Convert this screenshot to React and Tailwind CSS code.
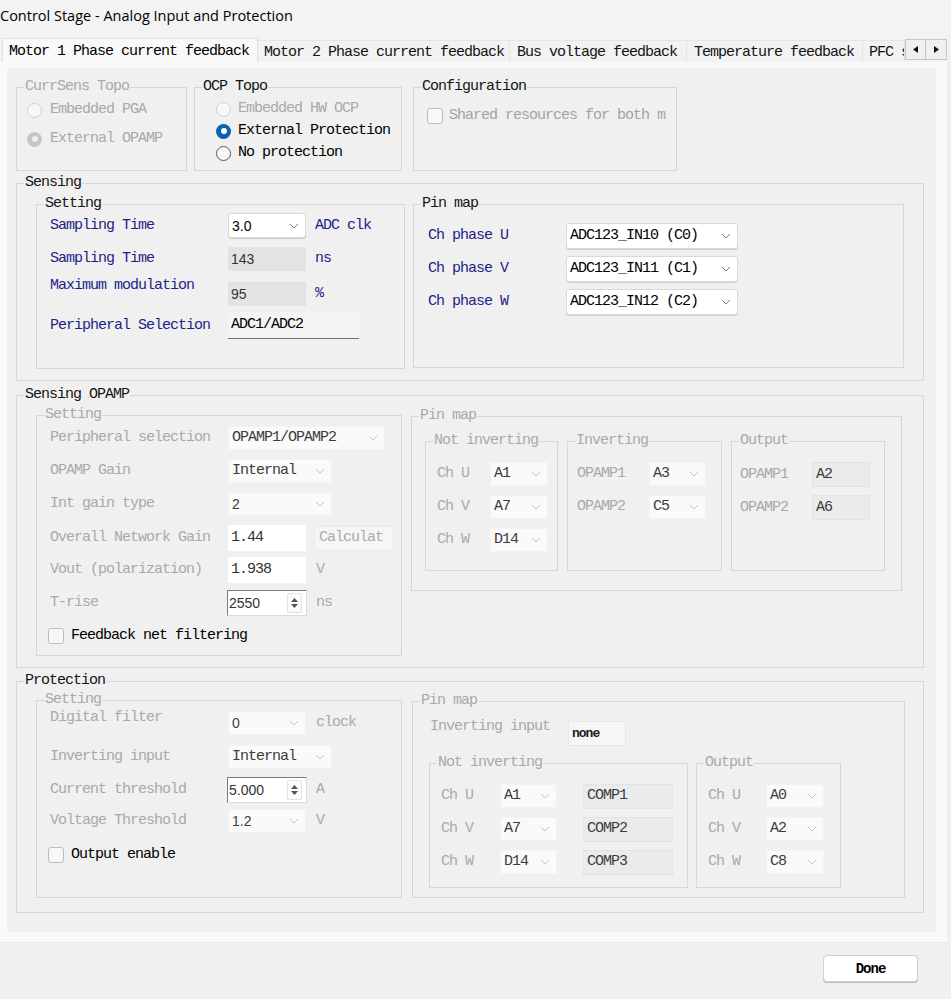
import React from "react";

const SANS = "font-['Segoe_UI','Liberation_Sans',sans-serif] tracking-normal text-[14px]";

const TONE = {
  dark: "text-[#141414]",
  off: "text-[#a9a9a9]",
  blue: "text-[#1e1e86]",
};

function Group({ title, tone = "dark", className = "", children }) {
  return (
    <div className={`relative border border-[#d6d6d6] ${className}`}>
      <span className={`absolute left-[7px] -top-[10px] px-[1px] bg-[#f0f0f0] leading-[18px] ${TONE[tone]}`}>
        {title}
      </span>
      {children}
    </div>
  );
}

function Chevron({ light }) {
  return (
    <svg width="10" height="6" viewBox="0 0 10 6" className={light ? "text-[#c4c4c4]" : "text-[#7a7a7a]"}>
      <path d="M1 1 L5 5 L9 1" fill="none" stroke="currentColor" strokeWidth="1" />
    </svg>
  );
}

function Select({ value, className = "", off, sans }) {
  const box = off
    ? "bg-[#fafafa] border border-[#f3f3f3] text-[#3c3c3c]"
    : "bg-white border border-[#d9d9d9] rounded-[3px] shadow-[0_1px_0_#cfcfcf] text-black";
  return (
    <div className={`flex items-center justify-between pl-[3px] pr-[6px] ${box} ${className}`}>
      <span className={sans ? SANS : ""}>{value}</span>
      <Chevron light={off} />
    </div>
  );
}

function Field({ value, className = "", sans }) {
  return (
    <div className={`flex items-center pl-[3px] ${className}`}>
      <span className={sans ? SANS : ""}>{value}</span>
    </div>
  );
}

function Spin({ value, className = "" }) {
  return (
    <div className={`flex items-center justify-between bg-white border border-[#dcdcdc] border-l-[#7c7c7c] border-t-[#7c7c7c] pl-[1px] pr-[4px] ${className}`}>
      <span className={`${SANS} text-[#333]`}>{value}</span>
      <div className="flex flex-col w-[15px] h-[20px] border border-[#e2e2e2] rounded-[2px] bg-[#fbfbfb] items-center justify-center gap-[2px]">
        <svg width="7" height="4" viewBox="0 0 7 4"><path d="M0 4 L3.5 0 L7 4 Z" fill="#555" /></svg>
        <svg width="7" height="4" viewBox="0 0 7 4"><path d="M0 0 L3.5 4 L7 0 Z" fill="#555" /></svg>
      </div>
    </div>
  );
}

function Radio({ state }) {
  if (state === "offOn")
    return (
      <div className="w-[15px] h-[15px] rounded-full bg-[#c6c6c6] flex items-center justify-center">
        <div className="w-[6px] h-[6px] rounded-full bg-[#efefef]" />
      </div>
    );
  if (state === "on")
    return (
      <div className="w-[15px] h-[15px] rounded-full bg-[#0a62b5] flex items-center justify-center">
        <div className="w-[6px] h-[6px] rounded-full bg-white" />
      </div>
    );
  if (state === "none") return <div className="w-[15px] h-[15px] rounded-full border border-[#5a5a5a] bg-[#f7f7f7]" />;
  return <div className="w-[15px] h-[15px] rounded-full border border-[#d0d0d0] bg-[#f7f7f7]" />;
}

function Check() {
  return <div className="w-[16px] h-[16px] rounded-[3px] border border-[#bcbcbc] bg-[#f8f8f8] shrink-0" />;
}

function Tab({ label, className = "" }) {
  return (
    <div className={`h-[22px] shrink-0 bg-[#f2f2f2] border-t border-r border-[#e4e4e4] flex items-center pt-[2px] pl-[6px] whitespace-nowrap overflow-hidden ${className}`}>
      {label}
    </div>
  );
}

export default function App() {
  return (
    <div className="w-[951px] h-[999px] bg-[#f0f0f0] flex flex-col overflow-hidden font-['Liberation_Mono',monospace] text-[15px] leading-[18px] tracking-[-1px] text-[#141414]">
      {/* window title */}
      <div className="h-[38px] bg-[#f3f3f3] pt-[5px]">
        <span className="font-['Segoe_UI','Open_Sans',sans-serif] text-[14.5px] leading-[22px] tracking-normal text-black">
          Control Stage - Analog Input and Protection
        </span>
      </div>

      {/* tab strip */}
      <div className="h-[24px] flex items-end bg-[#f3f3f3]">
        <div className="ml-[2px] w-[256px] h-[24px] bg-[#f9f9f9] border-t border-l border-r border-[#e0e0e0] flex items-center pt-[2px] pl-[6px] text-black">
          Motor 1 Phase current feedback
        </div>
        <div className="flex items-end w-[647px] overflow-hidden">
          <Tab label="Motor 2 Phase current feedback" className="w-[252px] pl-[5px]" />
          <Tab label="Bus voltage feedback" className="w-[177px] pl-[7px]" />
          <Tab label="Temperature feedback" className="w-[176px] pl-[7px]" />
          <Tab label="PFC s" className="w-[42px]" />
        </div>
        <div className="flex mb-[2px]">
          <div className="w-[21px] h-[21px] border border-[#c6c6c6] bg-[#f0f0f0] flex items-center justify-center">
            <svg width="5" height="7" viewBox="0 0 5 7"><path d="M5 0 L0 3.5 L5 7 Z" fill="#111" /></svg>
          </div>
          <div className="w-[21px] h-[21px] border border-l-0 border-[#c6c6c6] bg-[#f0f0f0] flex items-center justify-center">
            <svg width="5" height="7" viewBox="0 0 5 7"><path d="M0 0 L5 3.5 L0 7 Z" fill="#111" /></svg>
          </div>
        </div>
      </div>

      {/* tab page */}
      <div className="w-[947px] h-[881px] bg-[#f9f9f9] pl-[7px] pt-[6px] border-b border-[#e6e6e6]">
        <div className="w-[929px] h-[864px] bg-[#f0f0f0] pl-[9px] pt-[19px]">
          {/* topology row */}
          <div className="flex items-start">
            <Group title="CurrSens Topo" tone="off" className="w-[171px] h-[84px] pl-[10px] pt-[12px]">
              <div className="flex flex-col gap-[9px] text-[#a9a9a9]">
                <div className="flex items-center h-[20px] gap-[8px]"><Radio state="off" /><span>Embedded PGA</span></div>
                <div className="flex items-center h-[20px] gap-[8px]"><Radio state="offOn" /><span>External OPAMP</span></div>
              </div>
            </Group>
            <Group title="OCP Topo" className="ml-[7px] w-[208px] h-[84px] pl-[21px] pt-[10px]">
              <div className="flex flex-col">
                <div className="flex items-center h-[22px] gap-[7px] text-[#a9a9a9]"><Radio state="off" /><span>Embedded HW OCP</span></div>
                <div className="flex items-center h-[22px] gap-[7px] text-black"><Radio state="on" /><span>External Protection</span></div>
                <div className="flex items-center h-[22px] gap-[7px] text-black"><Radio state="none" /><span>No protection</span></div>
              </div>
            </Group>
            <Group title="Configuration" className="ml-[11px] w-[264px] h-[84px] pl-[13px] pt-[19px]">
              <div className="flex items-center gap-[6px] text-[#a3a3a3] whitespace-nowrap">
                <Check />
                <span>Shared resources for both m</span>
              </div>
            </Group>
          </div>

          {/* Sensing */}
          <Group title="Sensing" className="mt-[12px] w-[908px] h-[198px] pl-[19px] pt-[20px] flex items-start">
            <Group title="Setting" className="w-[369px] h-[165px] pl-[13px] pt-[8px]">
              <div className="flex items-center h-[25px]">
                <span className="w-[178px] text-[#1e1e86]">Sampling Time</span>
                <Select value="3.0" sans className="w-[78px] h-[25px]" />
                <span className="ml-[9px] text-[#1e1e86]">ADC clk</span>
              </div>
              <div className="flex items-center h-[24px] mt-[9px]">
                <span className="w-[178px] text-[#1e1e86]">Sampling Time</span>
                <Field value="143" sans className="w-[78px] h-[24px] bg-[#e3e3e3] text-[#333]" />
                <span className="ml-[9px] text-[#1e1e86]">ns</span>
              </div>
              <div className="flex items-center h-[24px] mt-[11px]">
                <span className="w-[178px] self-start -mt-[5px] text-[#1e1e86]">Maximum modulation</span>
                <Field value="95" sans className="w-[78px] h-[24px] bg-[#e3e3e3] text-[#333]" />
                <span className="ml-[9px] text-[#1e1e86]">%</span>
              </div>
              <div className="flex items-center h-[27px] mt-[6px]">
                <span className="w-[178px] text-[#1e1e86]">Peripheral Selection</span>
                <Field value="ADC1/ADC2" className="w-[131px] h-[27px] bg-[#f4f4f4] border-b border-[#6f6f6f] text-black" />
              </div>
            </Group>
            <Group title="Pin map" className="ml-[8px] w-[491px] h-[164px] pl-[14px] pt-[18px]">
              <div className="flex flex-col gap-[7px]">
                {[
                  ["Ch phase U", "ADC123_IN10 (C0)"],
                  ["Ch phase V", "ADC123_IN11 (C1)"],
                  ["Ch phase W", "ADC123_IN12 (C2)"],
                ].map(([l, v]) => (
                  <div key={l} className="flex items-center h-[26px]">
                    <span className="w-[138px] text-[#1e1e86]">{l}</span>
                    <Select value={v} className="w-[172px] h-[26px]" />
                  </div>
                ))}
              </div>
            </Group>
          </Group>

          {/* Sensing OPAMP */}
          <Group title="Sensing OPAMP" className="mt-[14px] w-[908px] h-[273px] pl-[19px] pt-[19px] flex items-start">
            <Group title="Setting" tone="off" className="w-[366px] h-[241px] pl-[13px] pt-[10px]">
              <div className="flex items-center h-[24px]">
                <span className="w-[178px] text-[#a9a9a9]">Peripheral selection</span>
                <Select off value="OPAMP1/OPAMP2" className="w-[157px] h-[24px]" />
              </div>
              <div className="flex items-center h-[24px] mt-[9px]">
                <span className="w-[178px] text-[#a9a9a9]">OPAMP Gain</span>
                <Select off value="Internal" className="w-[104px] h-[24px]" />
              </div>
              <div className="flex items-center h-[24px] mt-[9px]">
                <span className="w-[178px] text-[#a9a9a9]">Int gain type</span>
                <Select off sans value="2" className="w-[104px] h-[24px]" />
              </div>
              <div className="flex items-center h-[26px] mt-[9px]">
                <span className="w-[178px] text-[#a9a9a9]">Overall Network Gain</span>
                <Field value="1.44" className="w-[78px] h-[26px] bg-white text-[#333]" />
                <div className="ml-[8px] w-[80px] h-[25px] bg-[#f6f6f6] border border-[#ebebeb] rounded-[3px] flex items-center pl-[4px] text-[#ababab] whitespace-nowrap overflow-hidden">
                  Calculat
                </div>
              </div>
              <div className="flex items-center h-[26px] mt-[6px]">
                <span className="w-[178px] text-[#a9a9a9]">Vout (polarization)</span>
                <Field value="1.938" className="w-[78px] h-[26px] bg-white text-[#333]" />
                <span className="ml-[10px] text-[#a9a9a9]">V</span>
              </div>
              <div className="flex items-center h-[26px] mt-[7px]">
                <span className="w-[177px] text-[#a9a9a9]">T-rise</span>
                <Spin value="2550" className="w-[80px] h-[26px]" />
                <span className="ml-[9px] text-[#a9a9a9]">ns</span>
              </div>
              <div className="flex items-center h-[18px] mt-[11px] -ml-[2px] gap-[7px] text-black">
                <Check />
                <span>Feedback net filtering</span>
              </div>
            </Group>
            <Group title="Pin map" tone="off" className="ml-[9px] mt-[1px] w-[491px] h-[175px] pl-[13px] pt-[24px] flex items-start">
              <Group title="Not inverting" tone="off" className="w-[133px] h-[130px] pl-[11px] pt-[20px]">
                <div className="flex flex-col gap-[9px]">
                  {[["Ch U", "A1"], ["Ch V", "A7"], ["Ch W", "D14"]].map(([l, v]) => (
                    <div key={l} className="flex items-center h-[24px]">
                      <span className="w-[53px] text-[#a9a9a9]">{l}</span>
                      <Select off value={v} className="w-[58px] h-[24px]" />
                    </div>
                  ))}
                </div>
              </Group>
              <Group title="Inverting" tone="off" className="ml-[9px] w-[155px] h-[130px] pl-[9px] pt-[20px]">
                <div className="flex flex-col gap-[9px]">
                  {[["OPAMP1", "A3"], ["OPAMP2", "C5"]].map(([l, v]) => (
                    <div key={l} className="flex items-center h-[24px]">
                      <span className="w-[72px] text-[#a9a9a9]">{l}</span>
                      <Select off value={v} className="w-[57px] h-[24px]" />
                    </div>
                  ))}
                </div>
              </Group>
              <Group title="Output" tone="off" className="ml-[9px] w-[154px] h-[130px] pl-[8px] pt-[20px]">
                <div className="flex flex-col gap-[8px]">
                  {[["OPAMP1", "A2"], ["OPAMP2", "A6"]].map(([l, v]) => (
                    <div key={l} className="flex items-center h-[25px]">
                      <span className="w-[72px] text-[#a9a9a9]">{l}</span>
                      <Field value={v} className="w-[58px] h-[25px] bg-[#ebebeb] border border-[#e3e3e3] text-[#3c3c3c]" />
                    </div>
                  ))}
                </div>
              </Group>
            </Group>
          </Group>

          {/* Protection */}
          <Group title="Protection" className="mt-[13px] w-[908px] h-[232px] pl-[19px] pt-[18px] flex items-start">
            <Group title="Setting" tone="off" className="w-[366px] h-[198px] pl-[13px] pt-[10px]">
              <div className="flex items-center h-[24px]">
                <span className="w-[178px] self-start -mt-[2px] text-[#a9a9a9]">Digital filter</span>
                <Select off sans value="0" className="w-[78px] h-[24px]" />
                <span className="ml-[10px] text-[#a9a9a9]">clock</span>
              </div>
              <div className="flex items-center h-[24px] mt-[10px]">
                <span className="w-[178px] text-[#a9a9a9]">Inverting input</span>
                <Select off value="Internal" className="w-[104px] h-[24px]" />
              </div>
              <div className="flex items-center h-[26px] mt-[8px]">
                <span className="w-[177px] text-[#a9a9a9]">Current threshold</span>
                <Spin value="5.000" className="w-[80px] h-[26px]" />
                <span className="ml-[9px] text-[#a9a9a9]">A</span>
              </div>
              <div className="flex items-center h-[24px] mt-[6px]">
                <span className="w-[178px] text-[#a9a9a9]">Voltage Threshold</span>
                <Select off sans value="1.2" className="w-[78px] h-[24px]" />
                <span className="ml-[10px] text-[#a9a9a9]">V</span>
              </div>
              <div className="flex items-center h-[18px] mt-[13px] -ml-[2px] gap-[7px] text-black">
                <Check />
                <span>Output enable</span>
              </div>
            </Group>
            <Group title="Pin map" tone="off" className="ml-[10px] mt-[1px] w-[493px] h-[197px] pl-[16px] pt-[19px]">
              <div className="flex items-center h-[25px]">
                <span className="ml-[1px] w-[138px] self-start -mt-[3px] text-[#a9a9a9]">Inverting input</span>
                <Field value="none" className="w-[58px] h-[25px] bg-[#f6f6f6] border border-[#e8e8e8] text-[13px] font-bold text-[#222]" />
              </div>
              <div className="flex items-start mt-[17px]">
                <Group title="Not inverting" tone="off" className="w-[259px] h-[125px] pl-[11px] pt-[20px]">
                  <div className="flex flex-col gap-[9px]">
                    {[["Ch U", "A1", "COMP1"], ["Ch V", "A7", "COMP2"], ["Ch W", "D14", "COMP3"]].map(([l, v, c]) => (
                      <div key={l} className="flex items-center h-[24px]">
                        <span className="w-[59px] text-[#a9a9a9]">{l}</span>
                        <Select off value={v} className="w-[57px] h-[24px]" />
                        <Field value={c} className="ml-[26px] w-[90px] h-[25px] bg-[#ebebeb] border border-[#e3e3e3] text-[#3c3c3c]" />
                      </div>
                    ))}
                  </div>
                </Group>
                <Group title="Output" tone="off" className="ml-[8px] w-[145px] h-[125px] pl-[11px] pt-[20px]">
                  <div className="flex flex-col gap-[9px]">
                    {[["Ch U", "A0"], ["Ch V", "A2"], ["Ch W", "C8"]].map(([l, v]) => (
                      <div key={l} className="flex items-center h-[24px]">
                        <span className="w-[58px] text-[#a9a9a9]">{l}</span>
                        <Select off value={v} className="w-[58px] h-[24px]" />
                      </div>
                    ))}
                  </div>
                </Group>
              </div>
            </Group>
          </Group>
        </div>
      </div>

      {/* dialog buttons */}
      <div className="flex justify-end pr-[33px] pt-[12px]">
        <button className="w-[95px] h-[27px] bg-white border border-[#d0d0d0] rounded-[4px] shadow-[0_1px_0_#bdbdbd] text-black font-bold text-[14px]">
          Done
        </button>
      </div>
    </div>
  );
}
